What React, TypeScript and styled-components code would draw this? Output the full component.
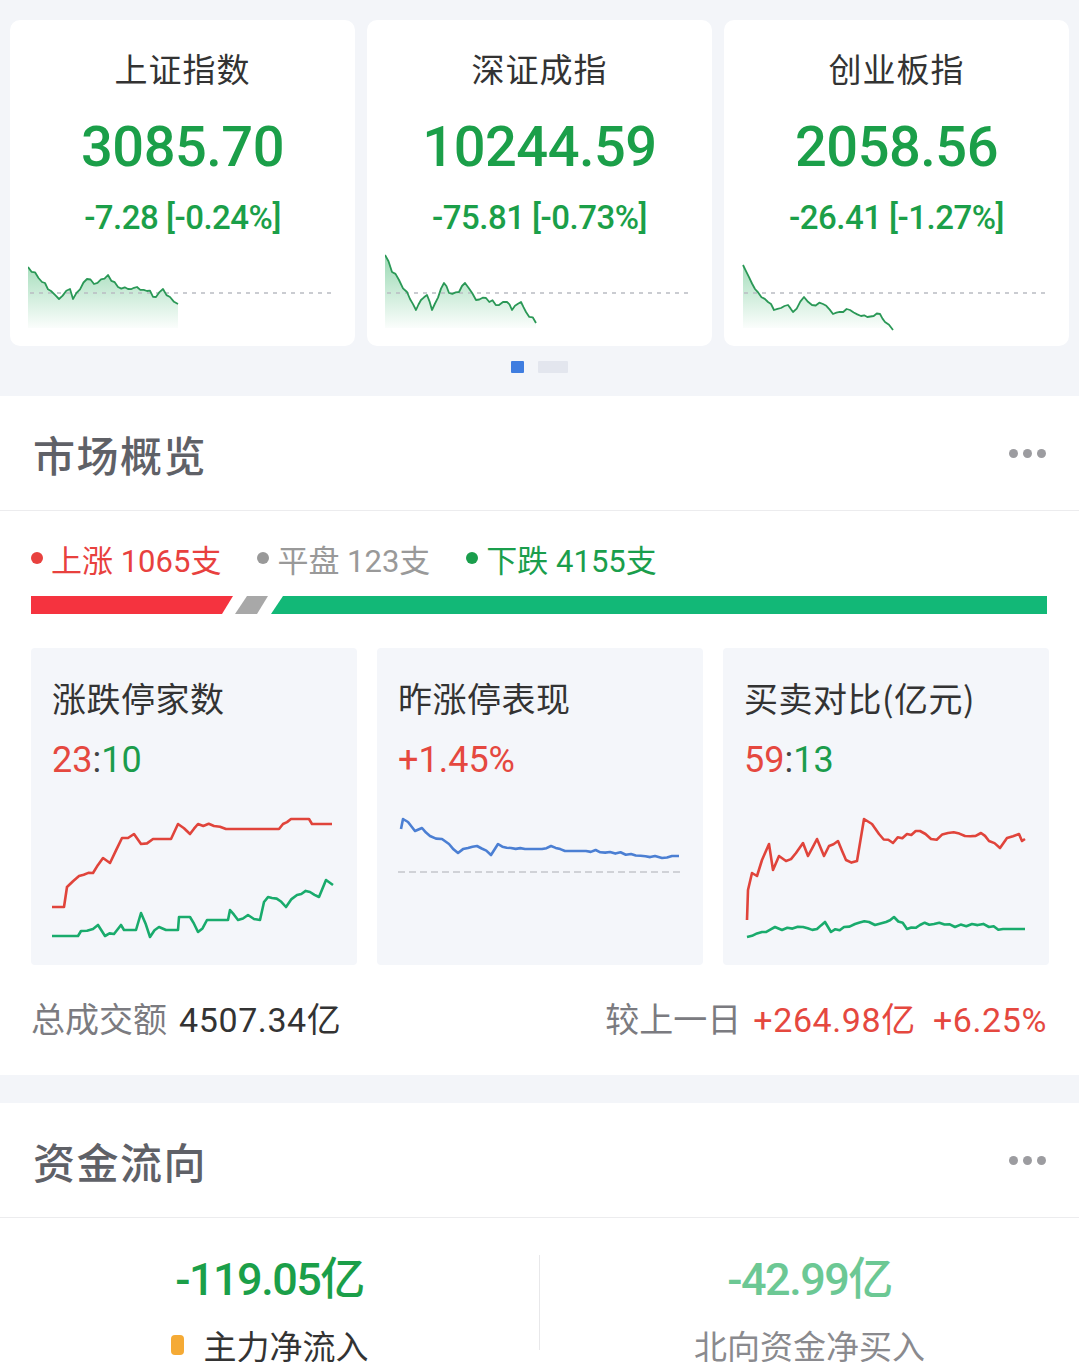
import React from "react";
import styled, { createGlobalStyle } from "styled-components";

const GlobalStyle = createGlobalStyle`
  html, body { margin: 0; padding: 0; background: #f3f5f9; }
  body { font-family: Roboto, "Noto Sans CJK SC", sans-serif; -webkit-font-smoothing: antialiased; }
  * { box-sizing: border-box; }
`;

type Pt = [number, number];

function rng(seed: number) {
  let a = seed;
  return () => {
    a |= 0;
    a = (a + 0x6d2b79f5) | 0;
    let t = Math.imul(a ^ (a >>> 15), 1 | a);
    t = (t + Math.imul(t ^ (t >>> 7), 61 | t)) ^ t;
    return ((t ^ (t >>> 14)) >>> 0) / 4294967296;
  };
}

function jag(points: Pt[], steps: number, amp: number, seed: number): Pt[] {
  const r = rng(seed);
  const out: Pt[] = [points[0]];
  for (let i = 1; i < points.length; i++) {
    const [x0, y0] = points[i - 1];
    const [x1, y1] = points[i];
    const flat = y0 === y1 && Math.abs(x1 - x0) > 10;
    const n = Math.max(1, Math.round((Math.abs(x1 - x0) / 10) * steps));
    for (let s = 1; s <= n; s++) {
      const t = s / n;
      const x = x0 + (x1 - x0) * t;
      const j = s === n || flat ? 0 : (r() - 0.5) * 2 * amp;
      out.push([x, y0 + (y1 - y0) * t + j]);
    }
  }
  return out;
}

const toPath = (p: Pt[]) =>
  p.map(([x, y], i) => `${i ? "L" : "M"}${x.toFixed(1)} ${y.toFixed(1)}`).join(" ");

/* ---------- data ---------- */

const indices = [
  {
    name: "上证指数",
    value: "3085.70",
    change: "-7.28 [-0.24%]",
    pts: [[0, 15], [14, 30], [23, 39], [31, 47], [42, 37], [45, 47], [59, 27], [66, 32], [80, 23], [90, 35], [100, 37], [109, 35], [119, 39], [128, 45], [135, 37], [142, 45], [150, 52]] as Pt[],
    seed: 3,
  },
  {
    name: "深证成指",
    value: "10244.59",
    change: "-75.81 [-0.73%]",
    pts: [[0, 3], [7, 20], [14, 28], [22, 40], [31, 58], [36, 48], [42, 43], [47, 58], [59, 31], [64, 41], [74, 40], [80, 31], [91, 48], [101, 46], [114, 53], [122, 50], [127, 58], [136, 50], [141, 60], [151, 71]] as Pt[],
    seed: 7,
  },
  {
    name: "创业板指",
    value: "2058.56",
    change: "-26.41 [-1.27%]",
    pts: [[1, 13], [13, 37], [26, 50], [32, 58], [46, 53], [51, 60], [62, 45], [70, 53], [81, 52], [91, 62], [108, 58], [119, 64], [138, 62], [143, 70], [151, 78]] as Pt[],
    seed: 11,
  },
];

const limitRed: Pt[] = [[0, 97], [12, 97], [15, 77], [27, 66], [41, 63], [51, 48], [58, 53], [70, 28], [82, 24], [89, 34], [101, 29], [119, 29], [126, 14], [138, 24], [146, 14], [162, 16], [174, 19], [227, 19], [231, 14], [239, 9], [257, 9], [260, 14], [280, 14]];
const limitGreen: Pt[] = [[0, 126], [26, 126], [29, 121], [41, 119], [46, 115], [53, 126], [62, 124], [69, 115], [72, 120], [84, 120], [89, 103], [98, 127], [107, 117], [114, 120], [126, 120], [127, 107], [138, 107], [146, 122], [155, 110], [176, 110], [178, 100], [186, 110], [196, 105], [208, 110], [212, 92], [220, 88], [234, 97], [245, 85], [258, 82], [267, 87], [274, 70], [281, 75]];
const yestBlue: Pt[] = [[3, 19], [5, 9], [10, 12], [17, 21], [24, 18], [32, 26], [44, 29], [51, 34], [60, 43], [70, 38], [79, 36], [93, 45], [100, 34], [113, 38], [127, 39], [144, 39], [153, 36], [167, 41], [188, 41], [212, 42], [233, 44], [257, 46], [264, 48], [274, 46], [281, 46]];
const buyRed: Pt[] = [[3, 110], [4, 80], [8, 63], [13, 66], [18, 50], [25, 34], [29, 60], [35, 46], [42, 51], [52, 43], [59, 33], [64, 46], [73, 29], [80, 46], [85, 36], [94, 31], [102, 50], [113, 51], [120, 9], [128, 14], [135, 24], [149, 33], [163, 24], [176, 21], [187, 29], [204, 23], [221, 26], [237, 23], [245, 31], [256, 38], [263, 28], [275, 24], [278, 31], [281, 29]];
const sellGreen: Pt[] = [[3, 127], [18, 122], [31, 117], [38, 120], [59, 117], [73, 119], [81, 112], [87, 122], [100, 117], [111, 114], [125, 112], [131, 115], [142, 112], [150, 107], [163, 119], [176, 115], [190, 114], [211, 117], [228, 114], [245, 117], [259, 119], [281, 119]];

/* ---------- styled ---------- */

const Page = styled.div`
  width: 1079px;
  background: #f3f5f9;
`;

const Carousel = styled.div`
  padding: 20px 10px 0;
`;

const IndexGrid = styled.div`
  display: grid;
  grid-template-columns: repeat(3, 1fr);
  gap: 12px;
`;

const IndexCard = styled.div`
  background: #fff;
  border-radius: 10px;
  height: 326px;
  padding-top: 26px;
  display: flex;
  flex-direction: column;
  align-items: center;
`;

const IndexName = styled.div`
  font-family: "Noto Sans CJK SC", sans-serif;
  font-size: 33px;
  line-height: 44px;
  color: #333;
  letter-spacing: 1px;
`;

const IndexValue = styled.div`
  margin-top: 22px;
  font-size: 56px;
  line-height: 70px;
  font-weight: 500;
  color: #1b9f49;
  letter-spacing: -0.5px;
`;

const IndexChange = styled.div`
  margin-top: 16px;
  font-size: 33px;
  line-height: 40px;
  font-weight: 500;
  color: #1b9f49;
  letter-spacing: -0.5px;
`;

const Spark = styled.svg`
  align-self: flex-start;
  margin: 14px 0 0 18px;
  display: block;
`;

const Pager = styled.div`
  display: flex;
  justify-content: center;
  gap: 14px;
  padding: 15px 0 23px;
`;

const PagerDot = styled.div<{ $active?: boolean }>`
  width: ${(p) => (p.$active ? 13 : 30)}px;
  height: 12px;
  border-radius: 1px;
  background: ${(p) => (p.$active ? "#3f7de0" : "#e3e6ee")};
`;

const Section = styled.section<{ $gap?: number }>`
  background: #fff;
  margin-top: ${(p) => p.$gap ?? 0}px;
`;

const SectionHeader = styled.div`
  height: 115px;
  padding: 0 33px;
  display: flex;
  align-items: center;
  justify-content: space-between;
  border-bottom: 1px solid #ececee;
`;

const SectionTitle = styled.h2`
  margin: 0;
  font-family: "Noto Sans CJK SC", sans-serif;
  font-size: 42px;
  font-weight: 500;
  color: #5f6167;
  letter-spacing: 1.5px;
`;

const More = styled.div`
  display: flex;
  gap: 5px;
`;

const MoreDot = styled.span`
  width: 9px;
  height: 9px;
  border-radius: 50%;
  background: #9c9ca0;
`;

const OverviewBody = styled.div`
  padding: 0 32px 36px 31px;
`;

const Legend = styled.div`
  margin-top: 27px;
  display: flex;
  align-items: center;
  gap: 36px;
  height: 40px;
`;

const LegendItem = styled.div<{ $color: string }>`
  display: flex;
  align-items: center;
  gap: 8px;
  font-size: 31px;
  color: ${(p) => p.$color};
  &::before {
    content: "";
    width: 12px;
    height: 12px;
    border-radius: 50%;
    background: ${(p) => p.$color};
  }
`;

const RatioBar = styled.div`
  margin-top: 18px;
  display: flex;
  height: 18px;
`;

const Seg = styled.div<{ $color: string; $kind: "first" | "mid" | "last" }>`
  height: 100%;
  background: ${(p) => p.$color};
  margin-left: ${(p) => (p.$kind === "first" ? 0 : p.$kind === "mid" ? 2 : 3)}px;
  clip-path: ${(p) =>
    p.$kind === "first"
      ? "polygon(0 0, 100% 0, calc(100% - 11px) 100%, 0 100%)"
      : p.$kind === "mid"
      ? "polygon(12px 0, 100% 0, calc(100% - 11px) 100%, 0 100%)"
      : "polygon(12px 0, 100% 0, 100% 100%, 0 100%)"};
`;

const StatGrid = styled.div`
  margin-top: 34px;
  display: grid;
  grid-template-columns: repeat(3, 1fr);
  gap: 20px;
`;

const StatCard = styled.div`
  background: #f4f6fa;
  border-radius: 4px;
  height: 317px;
  padding: 28px 21px 0;
`;

const StatTitle = styled.div`
  font-family: "Noto Sans CJK SC", sans-serif;
  font-size: 34px;
  line-height: 44px;
  color: #333;
  letter-spacing: 0.5px;
`;

const StatValue = styled.div`
  margin-top: 18px;
  font-size: 36px;
  line-height: 44px;
`;

const Tone = styled.span<{ $c: "red" | "green" | "dark" }>`
  color: ${(p) => (p.$c === "red" ? "#e5483f" : p.$c === "green" ? "#1b9c4c" : "#444")};
`;

const StatChart = styled.svg`
  display: block;
  margin-top: 28px;
`;

const Turnover = styled.div`
  margin-top: 30px;
  display: flex;
  justify-content: space-between;
  align-items: center;
  height: 44px;
  font-size: 34px;
`;

const Label = styled.span`
  font-family: "Noto Sans CJK SC", sans-serif;
  color: #7b7b80;
  margin-right: 12px;
`;

const Num = styled.span<{ $red?: boolean }>`
  color: ${(p) => (p.$red ? "#e5483f" : "#333")};
  letter-spacing: 0.6px;
  word-spacing: 8px;
`;

const FlowGrid = styled.div`
  display: grid;
  grid-template-columns: 1fr 1px 1fr;
  height: 160px;
`;

const FlowCol = styled.div`
  display: flex;
  flex-direction: column;
  align-items: center;
  padding-top: 34px;
`;

const FlowDivider = styled.div`
  margin-top: 37px;
  height: 95px;
  background: #e8e8ea;
`;

const FlowValue = styled.div<{ $light?: boolean }>`
  font-size: 45px;
  line-height: 56px;
  font-weight: 500;
  letter-spacing: -1.5px;
  color: ${(p) => (p.$light ? "#6cc894" : "#1b9f49")};
`;

const FlowLabel = styled.div<{ $muted?: boolean; $marker?: boolean }>`
  margin-top: 15px;
  display: flex;
  align-items: center;
  gap: 20px;
  font-family: "Noto Sans CJK SC", sans-serif;
  font-size: 33px;
  line-height: 44px;
  color: ${(p) => (p.$muted ? "#8a8a8e" : "#333")};
  ${(p) =>
    p.$marker
      ? `&::before { content: ""; width: 13px; height: 20px; border-radius: 4px; background: #f5aa35; }`
      : ""}
`;

/* ---------- components ---------- */

function Sparkline({ pts, seed, id }: { pts: Pt[]; seed: number; id: string }) {
  const line = jag(pts, 3, 2.4, seed);
  const last = line[line.length - 1];
  const area = `${toPath(line)} L${last[0]} 76 L${line[0][0]} 76 Z`;
  return (
    <Spark width={307} height={80} viewBox="0 0 307 80">
      <defs>
        <linearGradient id={id} x1="0" y1="0" x2="0" y2="76" gradientUnits="userSpaceOnUse">
          <stop offset="0" stopColor="#2bb060" stopOpacity="0.5" />
          <stop offset="1" stopColor="#2bb060" stopOpacity="0.02" />
        </linearGradient>
      </defs>
      <path d={area} fill={`url(#${id})`} />
      <line x1="2" y1="41" x2="306" y2="41" stroke="#b9bcc2" strokeWidth="1.4" strokeDasharray="4 5" />
      <path d={toPath(line)} fill="none" stroke="#2a9856" strokeWidth="1.8" strokeLinejoin="round" />
    </Spark>
  );
}

function LineChart({ lines, dashY }: { lines: { pts: Pt[]; color: string; seed: number; amp: number }[]; dashY?: number }) {
  return (
    <StatChart width={284} height={135} viewBox="0 0 284 135">
      {dashY !== undefined && (
        <line x1="0" y1={dashY} x2="284" y2={dashY} stroke="#c3c6cc" strokeWidth="1.6" strokeDasharray="7 4" />
      )}
      {lines.map((l, i) => (
        <path
          key={i}
          d={toPath(jag(l.pts, 2, l.amp, l.seed))}
          fill="none"
          stroke={l.color}
          strokeWidth="2.6"
          strokeLinejoin="round"
        />
      ))}
    </StatChart>
  );
}

function SectionHead({ title }: { title: string }) {
  return (
    <SectionHeader>
      <SectionTitle>{title}</SectionTitle>
      <More>
        <MoreDot />
        <MoreDot />
        <MoreDot />
      </More>
    </SectionHeader>
  );
}

export default function App() {
  return (
    <Page>
      <GlobalStyle />
      <Carousel>
        <IndexGrid>
          {indices.map((ix, i) => (
            <IndexCard key={ix.name}>
              <IndexName>{ix.name}</IndexName>
              <IndexValue>{ix.value}</IndexValue>
              <IndexChange>{ix.change}</IndexChange>
              <Sparkline pts={ix.pts} seed={ix.seed} id={`g${i}`} />
            </IndexCard>
          ))}
        </IndexGrid>
        <Pager>
          <PagerDot $active />
          <PagerDot />
        </Pager>
      </Carousel>

      <Section>
        <SectionHead title="市场概览" />
        <OverviewBody>
          <Legend>
            <LegendItem $color="#e8413e">上涨 1065支</LegendItem>
            <LegendItem $color="#999">平盘 123支</LegendItem>
            <LegendItem $color="#1a9e4c">下跌 4155支</LegendItem>
          </Legend>
          <RatioBar>
            <Seg $color="#f5333f" $kind="first" style={{ width: 202 }} />
            <Seg $color="#a8a8a8" $kind="mid" style={{ width: 33 }} />
            <Seg $color="#12b877" $kind="last" style={{ flex: 1 }} />
          </RatioBar>
          <StatGrid>
            <StatCard>
              <StatTitle>涨跌停家数</StatTitle>
              <StatValue>
                <Tone $c="red">23</Tone>
                <Tone $c="dark">:</Tone>
                <Tone $c="green">10</Tone>
              </StatValue>
              <LineChart
                lines={[
                  { pts: limitRed, color: "#e0443b", seed: 21, amp: 2.5 },
                  { pts: limitGreen, color: "#19ab6c", seed: 22, amp: 3 },
                ]}
              />
            </StatCard>
            <StatCard>
              <StatTitle>昨涨停表现</StatTitle>
              <StatValue>
                <Tone $c="red">+1.45%</Tone>
              </StatValue>
              <LineChart dashY={62} lines={[{ pts: yestBlue, color: "#4b7fd3", seed: 31, amp: 1.6 }]} />
            </StatCard>
            <StatCard>
              <StatTitle>买卖对比(亿元)</StatTitle>
              <StatValue>
                <Tone $c="red">59</Tone>
                <Tone $c="dark">:</Tone>
                <Tone $c="green">13</Tone>
              </StatValue>
              <LineChart
                lines={[
                  { pts: buyRed, color: "#e0443b", seed: 41, amp: 3 },
                  { pts: sellGreen, color: "#19ab6c", seed: 42, amp: 2.2 },
                ]}
              />
            </StatCard>
          </StatGrid>
          <Turnover>
            <div>
              <Label>总成交额</Label>
              <Num>4507.34亿</Num>
            </div>
            <div>
              <Label>较上一日</Label>
              <Num $red>+264.98亿 +6.25%</Num>
            </div>
          </Turnover>
        </OverviewBody>
      </Section>

      <Section $gap={28}>
        <SectionHead title="资金流向" />
        <FlowGrid>
          <FlowCol>
            <FlowValue>-119.05亿</FlowValue>
            <FlowLabel $marker>主力净流入</FlowLabel>
          </FlowCol>
          <FlowDivider />
          <FlowCol>
            <FlowValue $light>-42.99亿</FlowValue>
            <FlowLabel $muted>北向资金净买入</FlowLabel>
          </FlowCol>
        </FlowGrid>
      </Section>
    </Page>
  );
}
